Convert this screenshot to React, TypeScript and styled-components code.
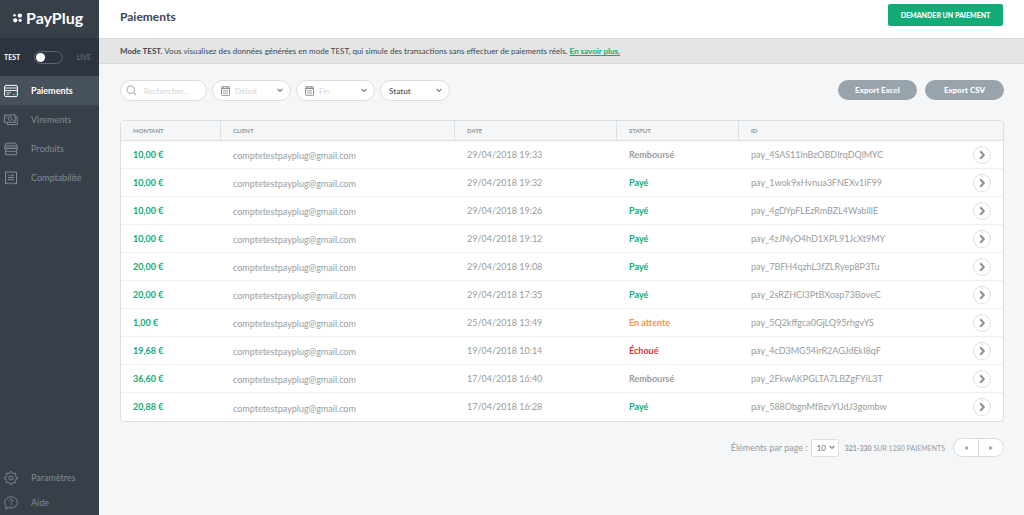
import React from "react";
import styled, { createGlobalStyle, css } from "styled-components";

const GlobalStyle = createGlobalStyle`
  *, *::before, *::after { box-sizing: border-box; }
  body { margin: 0; background: #f5f6f8; }
  body, button, input, select {
    font-family: Lato, "Liberation Sans", sans-serif;
    font-size: 9px;
    line-height: 12px;
  }
  button { cursor: pointer; }
`;

const Page = styled.div`
  display: flex;
  min-height: 100vh;
`;

/* Sidebar */

const Sidebar = styled.aside`
  display: flex;
  flex-direction: column;
  flex: none;
  width: 99px;
  background: #373f49;
`;

const Logo = styled.a`
  display: flex;
  align-items: center;
  gap: 3px;
  height: 38px;
  padding: 0 0 3px 13px;
  color: #fff;
  font-size: 16px;
  font-weight: 700;
  line-height: 20px;
  text-decoration: none;
`;

const ModeSwitch = styled.label`
  display: flex;
  align-items: center;
  justify-content: space-between;
  height: 38px;
  padding: 0 8px 0 4px;
  background: #2b343f;
  font-size: 7px;
`;

const ModeName = styled.span<{ $on?: boolean }>`
  color: ${(p) => (p.$on ? "#fff" : "#6d7782")};
  font-weight: ${(p) => (p.$on ? 700 : 400)};
`;

const Toggle = styled.input`
  appearance: none;
  display: flex;
  align-items: center;
  width: 29px;
  height: 13px;
  margin: 0;
  padding: 0 1px;
  border: 1px solid #5c6772;
  border-radius: 7px;
  &::before {
    content: "";
    width: 9px;
    height: 9px;
    border-radius: 50%;
    background: #fff;
  }
  &:checked { justify-content: flex-end; }
`;

const Nav = styled.nav`
  display: flex;
  flex-direction: column;
`;

const FooterNav = styled(Nav)`
  margin-top: auto;
`;

const NavLink = styled.a<{ $active?: boolean; $compact?: boolean }>`
  display: flex;
  align-items: center;
  gap: 13px;
  height: ${(p) => (p.$compact ? 25 : 29)}px;
  padding-left: 4px;
  background: ${(p) => (p.$active ? "#47515c" : "transparent")};
  color: ${(p) => (p.$active ? "#fff" : "#808a94")};
  font-weight: ${(p) => (p.$active ? 700 : 400)};
  text-decoration: none;
`;

/* Main column */

const Main = styled.main`
  flex: 1;
  min-width: 0;
`;

const Header = styled.header`
  display: flex;
  align-items: center;
  justify-content: space-between;
  height: 38px;
  padding: 0 21px 4px;
  background: #fff;
`;

const Title = styled.h1`
  margin: 0;
  color: #3c4652;
  font-size: 12px;
  font-weight: 700;
  line-height: 16px;
`;

const PrimaryButton = styled.button`
  width: 115px;
  height: 22px;
  margin-top: -4px;
  padding: 0;
  border: 0;
  border-radius: 2px;
  background: #12ac77;
  color: #fff;
  font-size: 7px;
  font-weight: 900;
`;

const Banner = styled.p`
  margin: 0;
  padding: 6px 21px;
  border-top: 1px solid #d9dcdc;
  border-bottom: 1px solid #d6d9d9;
  background: #e4e6e5;
  color: #3c4652;
  font-size: 8px;
`;

const GreenLink = styled.a`
  color: #12ac77;
  font-weight: 700;
`;

const Content = styled.div`
  padding: 16px 20px 0 21px;
`;

const Toolbar = styled.div`
  display: flex;
  align-items: flex-start;
  gap: 5px;
  margin-bottom: 19px;
`;

const pill = css`
  display: flex;
  align-items: center;
  border: 1px solid #d9dcdf;
  border-radius: 11px;
  background: #fff;
  color: #8d9193;
`;

const Field = styled.label<{ $width: number }>`
  ${pill}
  width: ${(p) => p.$width}px;
  height: 21px;
  gap: 5px;
  padding: 0 7px 0 8px;
`;

const SearchField = styled(Field)`
  gap: 7px;
  padding-left: 5px;
`;

const FieldInput = styled.input`
  flex: 1;
  width: 0;
  padding: 0;
  border: 0;
  outline: 0;
  background: transparent;
  font-size: 8px;
  &::placeholder { color: #d3d6d8; }
`;

const FieldSelect = styled.select<{ $plain?: boolean }>`
  flex: 1;
  width: 0;
  padding: 0;
  border: 0;
  outline: 0;
  appearance: none;
  background: transparent;
  color: #666a6d;
  font-size: 8px;
  font-weight: ${(p) => (p.$plain ? 400 : 700)};
`;

const Exports = styled.div`
  display: flex;
  gap: 8px;
  margin-left: auto;
`;

const ExportButton = styled.button`
  width: 79px;
  height: 20px;
  padding: 0;
  border: 0;
  border-radius: 10px;
  background: #98a3ab;
  color: #fff;
  font-size: 8px;
  font-weight: 900;
`;

/* Table */

const Table = styled.table`
  width: 100%;
  border: 1px solid #dcdfe2;
  border-radius: 4px;
  border-spacing: 0;
  table-layout: fixed;
  background: #fff;
  overflow: hidden;
`;

const HeadCell = styled.th<{ $width?: string }>`
  width: ${(p) => p.$width ?? "auto"};
  height: 20px;
  padding: 0 12px;
  border-bottom: 1px solid #dcdfe2;
  border-right: 1px solid #dcdfe2;
  background: #f5f6f8;
  color: #8f9496;
  font-size: 6px;
  font-weight: 700;
  line-height: 8px;
  text-align: left;
  &:last-child { border-right: 0; }
`;

const Row = styled.tr`
  &:last-child td { border-bottom: 0; }
`;

const Cell = styled.td`
  height: 28px;
  padding: 0 12px;
  border-bottom: 1px solid #eeeff0;
  color: #999c9c;
`;

const AmountCell = styled(Cell)`
  color: #16a877;
  font-weight: 700;
`;

const ClientCell = styled(Cell)`
  padding: 3px 12px 0;
`;

const StatusCell = styled(Cell)<{ $color: string }>`
  color: ${(p) => p.$color};
  font-weight: 700;
`;

const IdContent = styled.div`
  display: flex;
  align-items: center;
  justify-content: space-between;
`;

const OpenButton = styled.button`
  display: flex;
  align-items: center;
  justify-content: center;
  width: 18px;
  height: 18px;
  padding: 0;
  border: 1px solid #dddfe1;
  border-radius: 50%;
  background: #fff;
  color: #8b8f90;
`;

/* Pagination */

const Pagination = styled.footer`
  display: flex;
  align-items: center;
  justify-content: flex-end;
  padding: 16px 0;
  color: #999c9c;
`;

const PerPage = styled.label`
  display: flex;
  align-items: center;
  gap: 3px;
  margin-right: 6px;
`;

const SelectBox = styled.span`
  display: flex;
  align-items: center;
  width: 28px;
  height: 18px;
  padding: 0 3px 0 5px;
  border: 1px solid #dcdfe2;
  border-radius: 2px;
  background: #fff;
`;

const Range = styled.span`
  margin-right: 8px;
  font-size: 7px;
`;

const Pager = styled.div`
  ${pill}
  width: 51px;
  height: 19px;
`;

const PageButton = styled.button`
  display: flex;
  align-items: center;
  justify-content: center;
  flex: 1;
  height: 17px;
  padding: 0;
  border: 0;
  background: transparent;
  & + & { border-left: 1px solid #d9dcdf; }
`;

/* Icons */

const Line = ({ children }: { children: React.ReactNode }) => (
  <svg width="14" height="14" viewBox="0 0 14 14" fill="none" stroke="currentColor" strokeWidth="1" aria-hidden="true">
    {children}
  </svg>
);

const CardIcon = () => (
  <Line>
    <rect x="0.6" y="1.4" width="12.8" height="11.2" rx="1.4" />
    <path d="M1 4h12M1 6.500h12" strokeWidth="0.9" />
    <path d="M2.500 8.700h4.500M2.500 10.600h2.500M9 10.600h1.300" strokeWidth="0.7" />
    <path d="M11.300 10.600h2" stroke="#12c78a" />
  </Line>
);

const NotesIcon = () => (
  <Line>
    <rect x="0.6" y="2" width="10.600" height="7.300" />
    <circle cx="5.900" cy="5.600" r="1.800" />
    <path d="M2.400 3.500v1M9.400 6.800v1M12 4.200h1.300v7.400H3.200V9.800" />
  </Line>
);

const ShopIcon = () => (
  <Line>
    <path d="M2.2 1.2h9.6l1.6 3.6v1.7H.6V4.8z" />
    <path d="M1.5 3.400h11M.6 5h12.800" strokeWidth="0.8" />
    <path d="M1.600 6.500v6.200h10.800V6.500M1.600 9.300h10.800" />
  </Line>
);

const ReceiptIcon = () => (
  <Line>
    <path d="M1.500 1h11v12l-1.400-.9-1.300.9-1.400-.9L7 13l-1.400-.9-1.400.9-1.300-.9-1.400.9z" />
    <path d="M4 4.300h1.300M6.500 4.300H10M4 6.500h6M4 8.700h6" />
  </Line>
);

const GearIcon = () => (
  <Line>
    <circle cx="7" cy="7" r="2.1" />
    <path d="M5.8 1.9 6.2.7h1.6l.4 1.2 1.6.7 1.2-.6 1.1 1.2-.7 1.1.6 1.5 1.3.4v1.6l-1.3.4-.6 1.5.7 1.1-1.1 1.2-1.2-.6-1.6.7-.4 1.2H6.2l-.4-1.2-1.6-.7-1.2.6-1.1-1.2.7-1.1L2 8.2.7 7.8V6.2L2 5.8l.6-1.5-.7-1.1L3 2l1.2.6z" strokeLinejoin="round" />
  </Line>
);

const HelpIcon = () => (
  <Line>
    <path d="M7 .8c3.6 0 6.3 2.5 6.3 5.6S10.600 12 7 12c-1 0-1.800-.1-2.600-.4L2 13.200l.200-2.700C1.200 9.500.7 8 .7 6.400.7 3.300 3.400.8 7 .8z" />
    <path d="M5.300 5.200c0-1 .7-1.700 1.700-1.700s1.700.6 1.700 1.500c0 1.200-1.600 1.300-1.600 2.500M7.100 8.700v1" />
  </Line>
);

const LogoMark = () => (
  <svg width="10" height="10" viewBox="0 0 10 10" fill="#fff" aria-hidden="true">
    <circle cx="1.500" cy="2.200" r="1.300" />
    <circle cx="6.800" cy="2.600" r="2.200" />
    <circle cx="2.200" cy="7.300" r="2.100" />
    <circle cx="7.200" cy="7.300" r="1.600" />
  </svg>
);

const SearchIcon = () => (
  <svg width="11" height="11" viewBox="0 0 11 11" fill="none" stroke="#b3b7ba" strokeWidth="1.100" aria-hidden="true">
    <circle cx="4.800" cy="4.800" r="3.700" />
    <path d="m7.500 7.500 2.700 2.700" />
  </svg>
);

const CalendarIcon = () => (
  <svg width="9" height="10" viewBox="0 0 9 10" fill="none" stroke="#8f9394" aria-hidden="true">
    <rect x="0.500" y="0.800" width="8" height="8.500" rx="0.600" />
    <path d="M.5 2.500h8" strokeWidth="1.200" />
    <path d="M2.300 0v2M6.700 0v2M2 4.800h5M2 7h5" strokeWidth="0.900" />
  </svg>
);

const ChevronDown = () => (
  <svg width="6" height="5" viewBox="0 0 6 5" fill="none" stroke="#85898b" strokeWidth="1.300" aria-hidden="true">
    <path d="m.6 1 2.400 2.400L5.400 1" />
  </svg>
);

const ChevronRight = () => (
  <svg width="8" height="10" viewBox="0 0 8 10" fill="none" stroke="currentColor" strokeWidth="2" aria-hidden="true">
    <path d="m2.200 1.200 3.600 3.800-3.600 3.800" />
  </svg>
);

const Triangle = ({ d }: { d: string }) => (
  <svg width="4" height="4" viewBox="0 0 4 4" fill="#7f8385" aria-hidden="true">
    <path d={d} />
  </svg>
);

/* Data */

const statusColors: Record<string, string> = {
  "Payé": "#16a877",
  "Remboursé": "#999c9c",
  "En attente": "#f59549",
  "Échoué": "#cf3a36",
};

const payments = [
  ["10,00 €", "29/04/2018 19:33", "Remboursé", "pay_4SAS11lnBzOBDIrqDQlMYC"],
  ["10,00 €", "29/04/2018 19:32", "Payé", "pay_1wok9xHvnua3FNEXv1iF99"],
  ["10,00 €", "29/04/2018 19:26", "Payé", "pay_4gDYpFLEzRmBZL4WabIllE"],
  ["10,00 €", "29/04/2018 19:12", "Payé", "pay_4zJNyO4hD1XPL91JcXt9MY"],
  ["20,00 €", "29/04/2018 19:08", "Payé", "pay_7BFH4qzhL3fZLRyep8P3Tu"],
  ["20,00 €", "29/04/2018 17:35", "Payé", "pay_2sRZHCI3PtBXoap73BoveC"],
  ["1,00 €", "25/04/2018 13:49", "En attente", "pay_5Q2kffgca0GjLQ95rhgvYS"],
  ["19,68 €", "19/04/2018 10:14", "Échoué", "pay_4cD3MG54irR2AGJdEkI8qF"],
  ["36,60 €", "17/04/2018 16:40", "Remboursé", "pay_2FkwAKPGLTA7LBZgFYiL3T"],
  ["20,88 €", "17/04/2018 16:28", "Payé", "pay_588ObgnMf8zvYUdJ3gombw"],
];

export default function App() {
  return (
    <Page>
      <GlobalStyle />
      <Sidebar>
        <Logo href="#">
          <LogoMark />
          PayPlug
        </Logo>
        <ModeSwitch>
          <ModeName $on>TEST</ModeName>
          <Toggle type="checkbox" role="switch" />
          <ModeName>LIVE</ModeName>
        </ModeSwitch>
        <Nav>
          <NavLink href="#" $active><CardIcon />Paiements</NavLink>
          <NavLink href="#"><NotesIcon />Virements</NavLink>
          <NavLink href="#"><ShopIcon />Produits</NavLink>
          <NavLink href="#"><ReceiptIcon />Comptabilité</NavLink>
        </Nav>
        <FooterNav>
          <NavLink href="#" $compact><GearIcon />Paramètres</NavLink>
          <NavLink href="#" $compact><HelpIcon />Aide</NavLink>
        </FooterNav>
      </Sidebar>

      <Main>
        <Header>
          <Title>Paiements</Title>
          <PrimaryButton>DEMANDER UN PAIEMENT</PrimaryButton>
        </Header>
        <Banner>
          <strong>Mode TEST.</strong> Vous visualisez des données générées en mode TEST, qui simule des
          transactions sans effectuer de paiements réels. <GreenLink href="#">En savoir plus.</GreenLink>
        </Banner>

        <Content>
          <Toolbar>
            <SearchField $width={87}>
              <SearchIcon />
              <FieldInput type="search" placeholder="Rechercher..." aria-label="Rechercher" />
            </SearchField>
            <Field $width={79}>
              <CalendarIcon />
              <FieldInput placeholder="Début" aria-label="Début" />
              <ChevronDown />
            </Field>
            <Field $width={79}>
              <CalendarIcon />
              <FieldInput placeholder="Fin" aria-label="Fin" />
              <ChevronDown />
            </Field>
            <Field $width={70}>
              <FieldSelect aria-label="Statut">
                <option>Statut</option>
                {Object.keys(statusColors).map((s) => <option key={s}>{s}</option>)}
              </FieldSelect>
              <ChevronDown />
            </Field>
            <Exports>
              <ExportButton>Export Excel</ExportButton>
              <ExportButton>Export CSV</ExportButton>
            </Exports>
          </Toolbar>

          <Table>
            <thead>
              <tr>
                <HeadCell $width="11.34%">MONTANT</HeadCell>
                <HeadCell $width="26.53%">CLIENT</HeadCell>
                <HeadCell $width="18.37%">DATE</HeadCell>
                <HeadCell $width="13.83%">STATUT</HeadCell>
                <HeadCell>ID</HeadCell>
              </tr>
            </thead>
            <tbody>
              {payments.map(([amount, date, status, id]) => (
                <Row key={id}>
                  <AmountCell>{amount}</AmountCell>
                  <ClientCell>comptetestpayplug@gmail.com</ClientCell>
                  <Cell>{date}</Cell>
                  <StatusCell $color={statusColors[status]}>{status}</StatusCell>
                  <Cell>
                    <IdContent>
                      {id}
                      <OpenButton aria-label={`Ouvrir ${id}`}><ChevronRight /></OpenButton>
                    </IdContent>
                  </Cell>
                </Row>
              ))}
            </tbody>
          </Table>

          <Pagination>
            <PerPage>
              Éléments par page :
              <SelectBox>
                <FieldSelect $plain>
                  <option>10</option>
                  <option>20</option>
                  <option>50</option>
                </FieldSelect>
                <ChevronDown />
              </SelectBox>
            </PerPage>
            <Range><strong>321-330</strong> SUR 1280 PAIEMENTS</Range>
            <Pager>
              <PageButton aria-label="Page précédente"><Triangle d="M3.500 0v4L.500 2z" /></PageButton>
              <PageButton aria-label="Page suivante"><Triangle d="M.500 0v4l3-2z" /></PageButton>
            </Pager>
          </Pagination>
        </Content>
      </Main>
    </Page>
  );
}
